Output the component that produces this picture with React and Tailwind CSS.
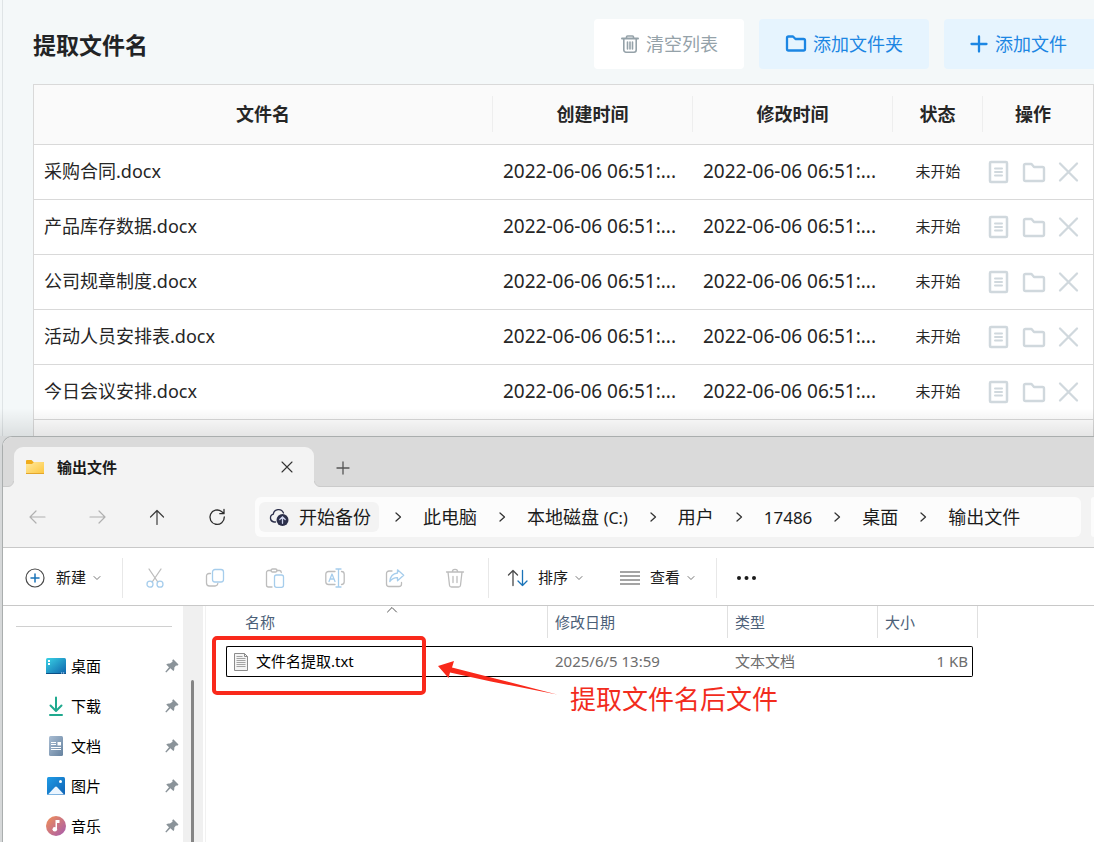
import React from "react";

const files = [
  "采购合同.docx",
  "产品库存数据.docx",
  "公司规章制度.docx",
  "活动人员安排表.docx",
  "今日会议安排.docx",
];

const time = "2022-06-06 06:51:...";

function Svg({ size = 20, stroke = "currentColor", sw = 1, className = "", children }) {
  return (
    <svg
      width={size}
      height={size}
      viewBox={`0 0 ${size} ${size}`}
      fill="none"
      stroke={stroke}
      strokeWidth={sw}
      strokeLinecap="round"
      strokeLinejoin="round"
      aria-hidden="true"
      className={`shrink-0 ${className}`}
    >
      {children}
    </svg>
  );
}

function TrashBold() {
  return (
    <Svg size={20} sw={1.6}>
      <path d="M2 4.5h16" strokeWidth="2" />
      <path d="M6.500 4V3a1 1 0 0 1 1-1h5a1 1 0 0 1 1 1v1M3.800 5v11a2.200 2.200 0 0 0 2.200 2.200h8a2.200 2.200 0 0 0 2.200-2.200V5M7.500 8v7M10 8v7M12.500 8v7" />
    </Svg>
  );
}

function FolderBold() {
  return (
    <Svg size={22} sw={2.3}>
      <path d="M2 5a1.500 1.500 0 0 1 1.500-1.500H8L10.500 6H18.500A1.500 1.500 0 0 1 20 7.500V16A1.500 1.500 0 0 1 18.500 17.500H3.500A1.500 1.500 0 0 1 2 16Z" />
    </Svg>
  );
}

function PlusBold() {
  return (
    <Svg size={18} sw={2.3}>
      <path d="M9 1.500V16.500M1.500 9H16.500" />
    </Svg>
  );
}

function RowActions() {
  return (
    <div className="flex items-center pl-[3px] text-[#d0d8dd]">
      <button aria-label="打开文件" className="mr-3">
        <Svg size={24} sw={2.5}>
          <rect x="4" y="2" width="17" height="20" rx="1" />
          <path d="M9 8.500h7M9 12h7M9 15.500h7" strokeWidth="2" />
        </Svg>
      </button>
      <button aria-label="打开文件夹" className="mr-3">
        <Svg size={24} sw={2.4}>
          <path d="M2 5.500a1.500 1.500 0 0 1 1.500-1.500H9.500L12 7H20.500A1.500 1.500 0 0 1 22 8.500V19.500A1.500 1.500 0 0 1 20.500 21H3.500A1.500 1.500 0 0 1 2 19.500Z" />
        </Svg>
      </button>
      <button aria-label="删除">
        <Svg size={22} sw={2.3}>
          <path d="M2 2.500L19 19.500M19 2.500L2 19.500" />
        </Svg>
      </button>
    </div>
  );
}

function HeadCell({ label, className = "", last = false }) {
  return (
    <th scope="col" className={`h-[59px] p-0 font-bold ${className}`}>
      <div
        className={`flex h-9 items-center justify-center ${last ? "pr-[10px]" : "border-r border-[#eeeeee]"}`}
      >
        {label}
      </div>
    </th>
  );
}

function ExtractPanel() {
  return (
    <section className="flex h-[436px] shrink-0 flex-col overflow-hidden bg-[#f4f8f9] pl-[33px]">
      <header className="flex h-[84px] shrink-0 items-start justify-between pt-[19px]">
        <h1 className="flex h-[52px] items-center text-[23px] font-bold text-[#222426]">
          提取文件名
        </h1>
        <div className="flex gap-[15px] text-[18px] whitespace-nowrap">
          <button className="flex h-[50px] items-center gap-[6px] rounded-sm bg-white px-[26px] text-[#95a2a9]">
            <TrashBold />
            清空列表
          </button>
          <button className="flex h-[50px] items-center gap-[6px] rounded-sm bg-[#e6f4fe] px-[26px] text-[#1c86e3]">
            <FolderBold />
            添加文件夹
          </button>
          <button className="flex h-[50px] items-center gap-[7px] rounded-l-sm bg-[#e6f4fe] pr-[27px] pl-[26px] text-[#1c86e3]">
            <PlusBold />
            添加文件
          </button>
        </div>
      </header>
      <div className="flex-1 border border-b-0 border-[#d9d9d9] bg-white">
        <table className="w-full table-fixed border-collapse text-[18px] text-[#262626]">
          <thead>
            <tr className="border-b border-[#d9d9d9] bg-[#fafafa]">
              <HeadCell label="文件名" />
              <HeadCell label="创建时间" className="w-[200px]" />
              <HeadCell label="修改时间" className="w-[200px]" />
              <HeadCell label="状态" className="w-[90px]" />
              <HeadCell label="操作" className="w-[110px]" last />
            </tr>
          </thead>
          <tbody>
            {files.map((name) => (
              <tr key={name} className="border-b border-[#d9d9d9]">
                <td className="h-[55px] px-[10px] py-0">{name}</td>
                <td className="px-[10px] py-0 text-[19px] whitespace-nowrap">{time}</td>
                <td className="px-[10px] py-0 text-[19px] whitespace-nowrap">{time}</td>
                <td className="p-0 text-center text-[15px]">未开始</td>
                <td className="p-0">
                  <RowActions />
                </td>
              </tr>
            ))}
          </tbody>
        </table>
      </div>
    </section>
  );
}

function YellowFolder() {
  return (
    <svg width="20" height="16" viewBox="0 0 20 16" aria-hidden="true" className="shrink-0">
      <defs>
        <linearGradient id="fold" x1="0" y1="0" x2="1" y2="1">
          <stop offset="0" stopColor="#ffe9a0" />
          <stop offset="1" stopColor="#fdc63c" />
        </linearGradient>
      </defs>
      <path d="M1 2a1 1 0 0 1 1-1h4.500l2 2H18a1 1 0 0 1 1 1v4H1z" fill="#f0ac1c" />
      <path d="M1 5h6l2-2h9.500a.5.500 0 0 1 .5.500V14a1 1 0 0 1-1 1H2a1 1 0 0 1-1-1z" fill="url(#fold)" />
      <path d="M1 14.500h18" stroke="#e3a62c" />
    </svg>
  );
}

function TitleBar() {
  return (
    <div className="flex h-[50px] shrink-0 items-end border-b border-[#cbcbcb] bg-[#dadada] pl-[11px]">
      <div className="relative -mb-px flex h-10 w-[300px] shrink-0 items-center rounded-t-[9px] bg-[#f3f3f3] pr-5 pl-[11px]">
        <svg width="6" height="6" viewBox="0 0 6 6" className="absolute bottom-0 -left-[6px]" aria-hidden="true">
          <path d="M6 0V6H0V5.500A5.500 5.500 0 0 0 5.500 0Z" fill="#f3f3f3" />
          <path d="M0 5.500A5.500 5.500 0 0 0 5.500 0" fill="none" stroke="#cbcbcb" />
        </svg>
        <svg width="6" height="6" viewBox="0 0 6 6" className="absolute -right-[6px] bottom-0" aria-hidden="true">
          <path d="M0 0V6H6V5.500A5.500 5.500 0 0 1 .5 0Z" fill="#f3f3f3" />
          <path d="M6 5.500A5.500 5.500 0 0 1 .5 0" fill="none" stroke="#cbcbcb" />
        </svg>
        <YellowFolder />
        <span className="ml-3 flex-1 text-[15px] font-bold text-[#1a1a1a]">输出文件</span>
        <button aria-label="关闭标签页" className="text-[#333]">
          <Svg size={14} sw={1.1}>
            <path d="M2 2L12 12M12 2L2 12" />
          </Svg>
        </button>
      </div>
      <button aria-label="新建标签页" className="mb-[11px] ml-[22px] text-[#555]">
        <Svg size={14} sw={1.3}>
          <path d="M7 1V13M1 7H13" />
        </Svg>
      </button>
    </div>
  );
}

function Crumb({ children }) {
  return (
    <>
      <Svg size={12} sw={1.3} className="mx-[19px] text-[#333]">
        <path d="M4 2L8.500 6L4 10" />
      </Svg>
      <a href="#" className="whitespace-nowrap">
        {children}
      </a>
    </>
  );
}

function NavBar() {
  return (
    <div className="flex h-[61px] shrink-0 items-center border-b border-[#c8c8c8] bg-[#f3f3f3] pl-6">
      <div className="flex shrink-0 gap-10">
        <button aria-label="后退" className="text-[#b0b0b0]">
          <Svg sw={1.2}>
            <path d="M18 10H3M9 4L3 10L9 16" />
          </Svg>
        </button>
        <button aria-label="前进" className="text-[#b0b0b0]">
          <Svg sw={1.2}>
            <path d="M3 10H18M12 4L18 10L12 16" />
          </Svg>
        </button>
        <button aria-label="上移" className="text-[#3c3c3c]">
          <Svg sw={1.2}>
            <path d="M10 17.500V3.500M3.500 10L10 3.500L16.500 10" />
          </Svg>
        </button>
        <button aria-label="刷新" className="text-[#2c2c2c]">
          <Svg sw={1.3}>
            <path d="M17.300 10A7.200 7.200 0 1 1 14.500 4.500L16.800 6.500M17 2.500V6.700H12.800" />
          </Svg>
        </button>
      </div>
      <nav
        aria-label="地址栏"
        className="ml-7 flex h-10 min-w-0 flex-1 items-center overflow-hidden rounded-md bg-[#fcfcfc] pl-1 text-[18px] text-[#1b1b1b]"
      >
        <button className="flex h-[30px] shrink-0 items-center gap-[10px] rounded-md bg-[#f3f3f3] pr-2 pl-[10px] whitespace-nowrap">
          <svg width="20" height="20" viewBox="0 0 20 20" fill="none" aria-hidden="true">
            <path
              d="M6.500 15H5A4 4 0 0 1 4.300 7.200A5.300 5.300 0 0 1 14.500 6"
              stroke="#2c2f4a"
              strokeWidth="1.300"
              strokeLinecap="round"
            />
            <circle cx="13.500" cy="13" r="6" fill="#2c2f4a" />
            <path
              d="M13.500 16.300V10M10.800 12.500L13.500 9.800L16.200 12.500"
              stroke="#cfd4ee"
              strokeWidth="1.300"
              strokeLinecap="round"
            />
          </svg>
          开始备份
        </button>
        <div className="-ml-[6px] flex items-center">
          <Crumb>此电脑</Crumb>
          <Crumb>
            本地磁盘 <span className="text-[16px]">(C:)</span>
          </Crumb>
          <Crumb>用户</Crumb>
          <Crumb>
            <span className="text-[17px]">17486</span>
          </Crumb>
          <Crumb>桌面</Crumb>
          <Crumb>输出文件</Crumb>
        </div>
      </nav>
      <div className="ml-[10px] h-10 w-[3px] shrink-0 rounded-l-md bg-[#fcfcfc]" />
    </div>
  );
}

function Chevron() {
  return (
    <Svg size={10} sw={1} className="ml-[6px] text-[#777]">
      <path d="M2 3.500L5 6.500L8 3.500" />
    </Svg>
  );
}

function Divider() {
  return <div className="h-10 w-px shrink-0 bg-[#e8e8e8]" />;
}

const GREY = "#bdbdbd";
const BLUE = "#a6cdec";

function ToolBar() {
  return (
    <div className="flex h-[58px] shrink-0 items-center border-b border-[#c8c8c8] bg-white pt-[2px] text-[15px] whitespace-nowrap text-[#1b1b1b]">
      <button className="mr-5 ml-[22px] flex items-center">
        <Svg size={20} sw={1.2} stroke="#4a4a4a" className="mr-[11px]">
          <circle cx="10" cy="10" r="9" />
          <path d="M10 6V14M6 10H14" stroke="#1a73b8" strokeWidth="1.500" />
        </Svg>
        新建
        <Chevron />
      </button>
      <Divider />
      <div className="mr-[23px] ml-[22px] flex gap-10">
        <button aria-label="剪切">
          <Svg stroke={GREY} sw={1.3}>
            <path d="M4 1L12.800 14M16 1L7.200 14" />
            <circle cx="5" cy="16.200" r="3" stroke={BLUE} />
            <circle cx="15" cy="16.200" r="3" stroke={BLUE} />
          </Svg>
        </button>
        <button aria-label="复制">
          <Svg stroke={GREY} sw={1.3}>
            <path d="M5.500 5.500H4A2.500 2.500 0 0 0 1.500 8V15A3 3 0 0 0 4.500 18H10A3 3 0 0 0 12.800 15.500" />
            <rect x="7.500" y="1.500" width="11" height="12.500" rx="2.500" stroke={BLUE} />
          </Svg>
        </button>
        <button aria-label="粘贴">
          <Svg stroke={GREY} sw={1.3}>
            <path d="M6 2.500H3.500A2 2 0 0 0 1.500 4.500V17A2 2 0 0 0 3.500 19H7M12 2.500H14.500A2 2 0 0 1 16.300 4.500" />
            <rect x="6" y="1" width="6" height="3" rx="1.500" />
            <rect x="9.500" y="7" width="9" height="12.300" rx="2" stroke={BLUE} />
          </Svg>
        </button>
        <button aria-label="重命名">
          <Svg stroke={GREY} sw={1.3}>
            <path d="M10 3.500H3.500A2.700 2.700 0 0 0 .8 6.200V13.800A2.700 2.700 0 0 0 3.500 16.500H10M16.500 3.500A2.700 2.700 0 0 1 19.200 6.200V13.800A2.700 2.700 0 0 1 16.500 16.500" />
            <path d="M4 13.500L7 6L10 13.500M5 11H9M13.500 1V19M11 1H16M11 19H16" stroke={BLUE} />
          </Svg>
        </button>
        <button aria-label="共享">
          <Svg stroke={GREY} sw={1.3}>
            <path d="M7 3H4A2.500 2.500 0 0 0 1.500 5.500V16A2.500 2.500 0 0 0 4 18.500H14A2.500 2.500 0 0 0 16.500 16V14.500" />
            <path d="M12.500 1.800L18.700 7.200L12.500 12.700V9.700C9 9.500 6.800 11 4.800 13.500C5.200 9 8 5.500 12.500 5Z" stroke={BLUE} />
          </Svg>
        </button>
        <button aria-label="删除">
          <Svg stroke={GREY} sw={1.3}>
            <path d="M1.500 4H18.500M7.300 4A2.700 2.700 0 0 1 12.700 4M3 4L4.500 17.200A2 2 0 0 0 6.500 19H13.500A2 2 0 0 0 15.500 17.200L17 4M8 8.500V14.500M12 8.500V14.500" />
          </Svg>
        </button>
      </div>
      <Divider />
      <button className="mr-9 ml-[18px] flex items-center">
        <Svg size={22} sw={1.3} stroke="#4a4a4a" className="mr-[9px]">
          <path d="M6 18.500V3.500M1.500 8L6 3.500L10.500 8" />
          <path d="M15.500 3.500V18.500M11 14L15.500 18.500L20 14" stroke="#1a73b8" />
        </Svg>
        排序
        <Chevron />
      </button>
      <button className="mr-5 flex items-center">
        <Svg size={20} sw={1.2} stroke="#4a4a4a" className="mr-[10px]">
          <path d="M.5 4H19.500M.5 8H19.500M.5 12H19.500M.5 16H19.500" />
        </Svg>
        查看
        <Chevron />
      </button>
      <Divider />
      <button aria-label="更多" className="ml-[18px]">
        <svg width="24" height="6" viewBox="0 0 24 6" fill="#1b1b1b" aria-hidden="true">
          <circle cx="4" cy="3" r="2" />
          <circle cx="11.500" cy="3" r="2" />
          <circle cx="19" cy="3" r="2" />
        </svg>
      </button>
    </div>
  );
}

function DesktopIcon() {
  return (
    <svg width="20" height="20" viewBox="0 0 20 20" aria-hidden="true">
      <defs>
        <linearGradient id="desk" x1="0" y1="0" x2="1" y2="1">
          <stop offset="0" stopColor="#3ad3e6" />
          <stop offset="1" stopColor="#0d62ab" />
        </linearGradient>
      </defs>
      <rect y="2" width="20" height="16" rx="1.500" fill="url(#desk)" />
      <path d="M2 4h2v2H2zM2 7h2v2H2z" fill="#fff" />
      <path d="M0 17h20v.5q0 .5-1 .5H1q-1 0-1-.5z" fill="#0b4f86" />
      <path d="M15 16.500h1.200v1H15zM17 16.500h1.200v1H17z" fill="#cfe8ff" />
    </svg>
  );
}

function DownloadIcon() {
  return (
    <Svg size={20} sw={2} stroke="#1fa98e">
      <path d="M10 1.500V14.500M4.500 9.500L10 15L15.500 9.500M4 19H16" />
    </Svg>
  );
}

function DocumentIcon() {
  return (
    <svg width="20" height="20" viewBox="0 0 20 20" aria-hidden="true">
      <defs>
        <linearGradient id="doc" x1="0" y1="0" x2="1" y2="1">
          <stop offset="0" stopColor="#a9bdd3" />
          <stop offset="1" stopColor="#66829f" />
        </linearGradient>
      </defs>
      <rect x="3" width="14" height="20" rx="1.500" fill="url(#doc)" />
      <path d="M5 6.500h5M5 8.500h5M5 11.500h10M5 13.500h10" stroke="#fff" />
      <path d="M11.500 6H15v3.500h-3.500z" fill="#fff" />
    </svg>
  );
}

function PictureIcon() {
  return (
    <svg width="20" height="20" viewBox="0 0 20 20" aria-hidden="true">
      <defs>
        <linearGradient id="pic" x1="0" y1="0" x2="1" y2="1">
          <stop offset="0" stopColor="#1f9be6" />
          <stop offset="1" stopColor="#0f62b4" />
        </linearGradient>
      </defs>
      <rect x="1" y="1" width="18" height="18" rx="1.500" fill="url(#pic)" />
      <path d="M2 18.500L9 11q1-1 2 0l7 7.500z" fill="#eaf5ff" />
      <circle cx="14.500" cy="5.500" r="1.500" fill="#fff" />
    </svg>
  );
}

function MusicIcon() {
  return (
    <svg width="20" height="20" viewBox="0 0 20 20" aria-hidden="true">
      <defs>
        <linearGradient id="mus" x1="0" y1="0" x2="1" y2="1">
          <stop offset="0" stopColor="#f29054" />
          <stop offset="1" stopColor="#a55ab0" />
        </linearGradient>
      </defs>
      <circle cx="10" cy="10" r="10" fill="url(#mus)" />
      <circle cx="8.800" cy="13.200" r="2.300" fill="#fff" />
      <path d="M9.500 4H13.500V7H11V13H9.500z" fill="#fff" />
    </svg>
  );
}

function Pin() {
  return (
    <svg width="14" height="14" viewBox="0 0 14 14" fill="#8a9399" aria-hidden="true" className="shrink-0">
      <path d="M8.300.3L13.500 5.500L12.200 6.700L11 6.600L9.200 8.700C9.600 10 9.200 11.200 8.400 12L5.400 9.300L1.300 13.400L.3 12.800L4 8.200L1.200 5.600C2.500 4.400 3.700 4.200 5 4.600L7.500 2.700L7.300 1.300Z" />
    </svg>
  );
}

const places = [
  ["桌面", DesktopIcon],
  ["下载", DownloadIcon],
  ["文档", DocumentIcon],
  ["图片", PictureIcon],
  ["音乐", MusicIcon],
];

function SideBar() {
  return (
    <aside className="w-[180px] shrink-0 pt-5">
      <div className="mr-[11px] ml-[13px] border-t border-[#d0d0d0]" />
      <ul className="mt-[19px]">
        {places.map(([label, Glyph]) => (
          <li key={label}>
            <a href="#" className="flex h-10 items-center gap-[5px] pr-1 pl-[43px] text-[15px] text-black">
              <Glyph />
              <span className="flex-1">{label}</span>
              <Pin />
            </a>
          </li>
        ))}
      </ul>
    </aside>
  );
}

function FileHead({ label, className = "", sorted = false }) {
  return (
    <th scope="col" className={`p-0 pb-2 text-left font-normal text-[#4c6078] ${className}`}>
      <div className="relative flex h-8 items-center border-r border-[#e0e0e0] pl-[7px]">
        <span className={sorted ? "pl-3" : ""}>{label}</span>
        {sorted && (
          <Svg size={12} className="absolute top-0 left-40 text-[#555]">
            <path d="M1.500 6L6 1.500L10.500 6" />
          </Svg>
        )}
      </div>
    </th>
  );
}

function FileList() {
  return (
    <div className="relative ml-[2px] flex-1 overflow-hidden border-l border-[#f1f1f1] pl-5">
      <table className="table-fixed border-separate border-spacing-0 text-[15px]">
        <thead>
          <tr>
            <FileHead label="名称" className="w-[322px]" sorted />
            <FileHead label="修改日期" className="w-[180px]" />
            <FileHead label="类型" className="w-[150px]" />
            <th scope="col" className="w-[95px] p-0 pb-2 pl-[7px] text-left font-normal text-[#4c6078]">
              大小
            </th>
            <td className="w-[5px] p-0 pb-2">
              <div className="h-8 border-r border-[#e0e0e0]" />
            </td>
          </tr>
        </thead>
        <tbody>
          <tr className="text-[#6d6d6d]">
            <td className="h-[31px] rounded-l-[2px] border-y border-l border-black p-0 text-black">
              <div className="flex items-center gap-2 pl-[7px]">
                <svg width="14" height="18" viewBox="0 0 14 18" fill="none" aria-hidden="true">
                  <path d="M.5.500H10.500L13.500 3.500V17.500H.5Z" fill="#f4f4f4" stroke="#8b8b8b" />
                  <path d="M10.500.5V3.500H13.500" stroke="#8b8b8b" />
                  <path
                    d="M2.500 3.500H8.500M2.500 5.500H11.500M2.500 7.500H11.500M2.500 9.500H11.500M2.500 11.500H11.500M2.500 13.500H11.500"
                    stroke="#a3a3a3"
                  />
                </svg>
                文件名提取.txt
              </div>
            </td>
            <td className="border-y border-black p-0 pl-[7px]">2025/6/5 13:59</td>
            <td className="border-y border-black p-0 pl-[7px]">文本文档</td>
            <td className="rounded-r-[2px] border-y border-r border-black p-0 pr-1 text-right">1 KB</td>
            <td className="p-0" />
          </tr>
        </tbody>
      </table>
      <div className="absolute top-[30px] left-[6px] h-[59px] w-[214px] rounded-[5px] border-4 border-[#f9291b]" />
      <svg width="122" height="40" viewBox="0 0 122 40" className="absolute top-[54px] left-[232px]" aria-hidden="true">
        <path d="M0 6L16 1L14 7.500L57 18.500L119 34.500L53 21.500L12 12.500L10.500 18Z" fill="#f9291b" />
      </svg>
      <p className="absolute top-[73px] left-[364px] text-[26px] leading-10 whitespace-nowrap text-[#f22c1d]">
        提取文件名后文件
      </p>
    </div>
  );
}

function Explorer() {
  return (
    <section className="flex min-h-0 flex-1 bg-[#d6d8d9] pl-[2px]">
      <div className="flex min-w-0 flex-1 flex-col overflow-hidden rounded-tl-[10px] border-t border-l border-[#aaaeae] bg-white">
        <TitleBar />
        <NavBar />
        <ToolBar />
        <div className="flex min-h-0 flex-1">
          <SideBar />
          <div className="flex w-5 shrink-0 flex-col items-center bg-[#f0f0f0] pt-[74px]">
            <div className="mr-px w-[3px] flex-1 rounded-t-sm bg-[#858585]" />
          </div>
          <FileList />
        </div>
      </div>
    </section>
  );
}

export default function App() {
  return (
    <main className="flex h-screen flex-col overflow-hidden font-['Noto_Sans','Noto_Sans_CJK_SC',sans-serif]">
      <div className="relative shrink-0">
        <ExtractPanel />
        <div className="absolute inset-y-0 left-[2px] w-px bg-[#dfe4e6]" />
        <div className="absolute inset-x-0 bottom-0 h-7 bg-linear-to-t from-black/10 to-transparent" />
      </div>
      <Explorer />
    </main>
  );
}
